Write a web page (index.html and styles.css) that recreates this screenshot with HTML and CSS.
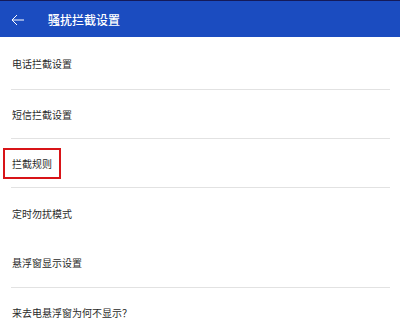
FILE: index.html
```html
<!DOCTYPE html>
<html lang="zh-CN">
  <head>
    <meta charset="UTF-8" />
    <meta name="viewport" content="width=device-width, initial-scale=1.0" />
    <title>骚扰拦截设置</title>
    <link rel="stylesheet" href="styles.css">
  </head>
  <body>
    <div class="app-bar">
      <svg class="back" width="14" height="12" viewBox="0 0 14 12">
        <path d="M13 6H1M6 1L1 6l5 5" fill="none" stroke="#fff" stroke-width="1" />
      </svg>
      <span class="title">骚扰拦截设置</span>
    </div>
    <ul class="menu">
      <li class="item first line">电话拦截设置</li>
      <li class="item line">短信拦截设置</li>
      <li class="item line"><span class="mark">拦截规则</span></li>
      <li class="item tall">定时勿扰模式</li>
      <li class="item tall line">悬浮窗显示设置</li>
      <li class="item">来去电悬浮窗为何不显示？</li>
    </ul>
  </body>
</html>
```

FILE: styles.css
```css
body {
  margin: 0;
  font-family: "Noto Sans CJK SC", "Noto Sans", sans-serif;
  background-color: #fff;
  width: 400px;
  height: 334px;
  overflow: hidden;
}

.app-bar {
  height: 36px;
  border-top: 1px solid #141a5a;
  background-color: #1b4cc0;
  display: flex;
  align-items: center;
  padding-left: 11px;
}

.back {
  margin-top: 2px;
}

.title {
  margin-left: 23px;
  color: #fff;
  font-size: 12px;
  font-weight: 500;
}

.menu {
  list-style: none;
  margin: 0;
  padding: 0 10px 0 11px;
}

.item {
  height: 49px;
  display: flex;
  align-items: center;
  font-size: 10px;
  color: #2a2a2a;
  box-sizing: border-box;
  padding-left: 1px;
}

.item.first {
  height: 53px;
}

.item.tall {
  height: 50px;
}

.line {
  border-bottom: 1px solid #e2e2e2;
}

.mark {
  margin-left: -9px;
  padding: 6px 7px;
  border: 2px solid #d81418;
}
```
